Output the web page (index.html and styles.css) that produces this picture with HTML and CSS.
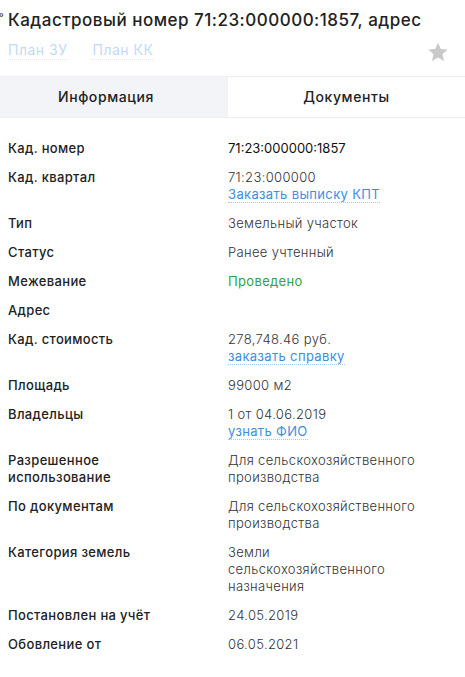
FILE: index.html
```html
<!DOCTYPE html>
<html lang="ru">
<head>
<meta charset="utf-8">
<link rel="stylesheet" href="styles.css">
</head>
<body>
<div class="page">
  <header class="head">
    <h1 class="title"><span class="caret">˚</span>Кадастровый номер 71:23:000000:1857, адрес</h1>
    <div class="sub">
      <div class="plans">
        <a class="plan">План ЗУ</a>
        <a class="plan">План КК</a>
      </div>
      <svg class="star" width="22" height="22" viewBox="0 0 24 24"><path d="M12 1.8l3.1 6.9 7.4.7-5.6 5 1.7 7.4L12 17.9l-6.6 3.9 1.7-7.4-5.6-5 7.4-.7z" fill="#c9c9c9"/></svg>
    </div>
  </header>
  <nav class="tabs">
    <div class="tab active">Информация</div>
    <div class="tab">Документы</div>
  </nav>
  <dl class="info">
    <div class="row"><dt>Кад. номер</dt><dd class="strong">71:23:000000:1857</dd></div>
    <div class="row"><dt>Кад. квартал</dt><dd>71:23:000000<br><a class="link">Заказать выписку КПТ</a></dd></div>
    <div class="row"><dt>Тип</dt><dd>Земельный участок</dd></div>
    <div class="row"><dt>Статус</dt><dd>Ранее учтенный</dd></div>
    <div class="row"><dt>Межевание</dt><dd class="ok">Проведено</dd></div>
    <div class="row"><dt>Адрес</dt><dd></dd></div>
    <div class="row"><dt>Кад. стоимость</dt><dd>278,748.46 руб.<br><a class="link">заказать справку</a></dd></div>
    <div class="row"><dt>Площадь</dt><dd>99000 м2</dd></div>
    <div class="row"><dt>Владельцы</dt><dd>1 от 04.06.2019<br><a class="link">узнать ФИО</a></dd></div>
    <div class="row"><dt>Разрешенное использование</dt><dd>Для сельскохозяйственного производства</dd></div>
    <div class="row"><dt>По документам</dt><dd>Для сельскохозяйственного производства</dd></div>
    <div class="row"><dt>Категория земель</dt><dd>Земли сельскохозяйственного назначения</dd></div>
    <div class="row"><dt>Постановлен на учёт</dt><dd>24.05.2019</dd></div>
    <div class="row"><dt>Обовление от</dt><dd>06.05.2021</dd></div>
  </dl>
</div>
</body>
</html>
```
FILE: styles.css
```css
* { box-sizing: border-box; }
html, body { margin: 0; padding: 0; background: #fff; }
body { font-family: Inter, "DejaVu Sans", sans-serif; color: #222; }
.page { width: 465px; }
.head { padding: 8px 0 0 8px; position: relative; }
.title { margin: 0; font-size: 17px; font-weight: 500; line-height: 24px; color: #222; letter-spacing: 0.5px; }
.caret { position: absolute; left: -1px; top: 8px; font-size: 14px; color: #444; letter-spacing: 0; }
.sub { display: flex; align-items: center; justify-content: space-between; padding: 0 16px 0 0; height: 44px; }
.plans { display: flex; gap: 25px; margin-top: -7px; }
.plan { font-size: 14px; color: #c3daf4; line-height: 18px; letter-spacing: 0.5px; border-bottom: 1px dotted #dde8f5; }
.star { margin-top: -4px; }
.tabs { display: grid; grid-template-columns: 228px 1fr; border-top: 1px solid #eceef1; border-bottom: 1px solid #eceef1; }
.tab { height: 40px; display: flex; align-items: center; justify-content: center; font-size: 14px; font-weight: 500; color: #222; letter-spacing: 0.6px; padding-bottom: 2px; }
.tab.active { background: #f3f4f7; padding-right: 16px; }
.info { margin: 0; padding: 22px 0 0 8px; display: flex; flex-direction: column; gap: 12px; }
.row { display: grid; grid-template-columns: 220px 1fr; font-size: 13px; line-height: 17px; letter-spacing: 0.35px; }
dt { font-weight: 500; color: #222; padding-right: 30px; }
dd { margin: 0; font-weight: 300; color: #333; padding-right: 44px; }
dd.strong { font-weight: 400; color: #111; letter-spacing: 0; }
dd.ok { color: #2ca83a; font-weight: 400; }
.link { color: #3d8ee0; font-weight: 400; border-bottom: 1px dotted #a9c9ec; }
```
